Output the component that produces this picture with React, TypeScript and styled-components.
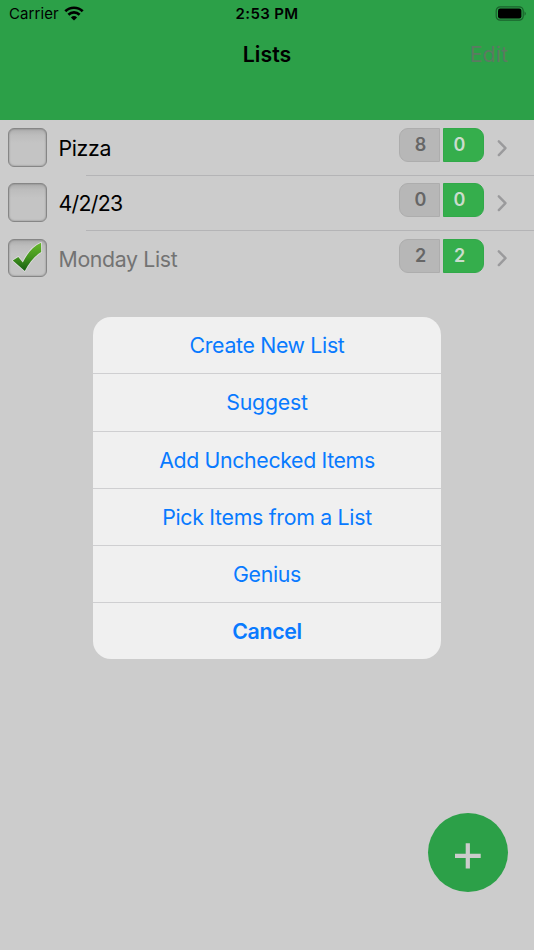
import React from 'react';
import styled, { createGlobalStyle } from 'styled-components';

const GlobalStyle = createGlobalStyle`
  * { box-sizing: border-box; }
  body { margin: 0; background: #cccccc; font-family: Inter, "Liberation Sans", sans-serif; }
  button { font: inherit; border: 0; padding: 0; background: none; }
`;

const Screen = styled.div`
  position: relative;
  width: 534px;
  height: 950px;
  overflow: hidden;
  background: #cccccc;
  color: #000;
`;

const Header = styled.header`
  height: 120px;
  background: #2ca048;
`;

const StatusBar = styled.div`
  display: grid;
  grid-template-columns: 1fr auto 1fr;
  align-items: center;
  height: 27px;
  padding: 0 7px 0 9px;
`;

const Carrier = styled.div`
  display: flex;
  align-items: center;
  gap: 5px;
  font-size: 15px;
  letter-spacing: 0.1px;
  line-height: 27px;
`;

const Clock = styled.div`
  margin-right: 2px;
  font-size: 15px;
  font-weight: 600;
  line-height: 27px;
  letter-spacing: 0.35px;
`;

const BatteryIcon = styled.svg`
  justify-self: end;
`;

const NavBar = styled.div`
  display: grid;
  grid-template-columns: 1fr auto 1fr;
  align-items: center;
  height: 54px;
  padding: 0 26px;
`;

const Title = styled.h1`
  grid-column: 2;
  margin: 0;
  font-size: 21.3px;
  font-weight: 600;
  letter-spacing: 0;
`;

const EditButton = styled.button`
  && {
    justify-self: end;
    font-size: 21.3px;
    letter-spacing: 0.1px;
    color: #5c7a62;
  }
`;

const Rows = styled.ul`
  margin: 0;
  padding: 0;
  list-style: none;
`;

const Row = styled.li`
  display: grid;
  grid-template-columns: 39px 1fr auto 11px;
  align-items: start;
  height: 55.2px;
  padding: 8.2px 26px 0 8px;

  & + & {
    background: linear-gradient(#b4b4b6, #b4b4b6) 86px 0 / 448px 1px no-repeat;
  }
`;

const Checkbox = styled.span`
  display: block;
  width: 38.6px;
  height: 38.4px;
  border: 1.5px solid #868686;
  border-radius: 6px;
  background: linear-gradient(#adadad, #bdbdbd 6px, #c4c4c4 14px);
  box-shadow: inset 0 0 2px rgba(0, 0, 0, 0.35);
`;

const Name = styled.span<{ $done: boolean; $spacing: number }>`
  padding-left: 11.5px;
  font-size: 21.3px;
  line-height: 40px;
  letter-spacing: ${p => p.$spacing}px;
  color: ${p => (p.$done ? '#737373' : '#000')};
`;

const Counts = styled.div`
  display: flex;
  gap: 3px;
  margin-right: 13px;
`;

const Count = styled.span<{ $green?: boolean }>`
  width: 41px;
  height: 34px;
  padding-left: ${p => (p.$green ? 0 : 2)}px;
  padding-right: ${p => (p.$green ? 8 : 0)}px;
  border: 1px solid ${p => (p.$green ? '#31a949' : '#adadad')};
  border-radius: ${p => (p.$green ? '0 9px 9px 0' : '9px 0 0 9px')};
  background: ${p => (p.$green ? '#35ae4c' : '#b7b7b7')};
  color: ${p => (p.$green ? '#cbdccd' : '#666')};
  font-size: 18px;
  font-weight: 600;
  line-height: 32px;
  text-align: center;
`;

const Chevron = styled.svg`
  display: block;
  margin-top: 10.5px;
`;

const Sheet = styled.div`
  position: absolute;
  left: 93px;
  top: 317px;
  width: 348px;
  display: grid;
  grid-template-rows: 56.4px repeat(5, 57.2px);
  overflow: hidden;
  border-radius: 18px;
  background: #f0f0f0;
`;

const Action = styled.button<{ $bold?: boolean; $spacing: number }>`
  && {
    font-size: 21.3px;
    font-weight: ${p => (p.$bold ? 600 : 400)};
    letter-spacing: ${p => p.$spacing}px;
    color: #087aff;
  }

  && + && {
    border-top: 1px solid #cfcfd1;
  }
`;

const AddButton = styled.button`
  && {
    position: absolute;
    left: 428px;
    top: 813px;
    width: 80px;
    height: 79px;
    border-radius: 50%;
    background: #2ca048;
  }
`;

const lists = [
  { name: 'Pizza', total: 8, checked: 0, done: false, spacing: -0.35 },
  { name: '4/2/23', total: 0, checked: 0, done: false, spacing: -0.7 },
  { name: 'Monday List', total: 2, checked: 2, done: true, spacing: -0.35 },
];

const actions = [
  { label: 'Create New List', spacing: -0.33 },
  { label: 'Suggest', spacing: -0.25 },
  { label: 'Add Unchecked Items', spacing: -0.35 },
  { label: 'Pick Items from a List', spacing: -0.29 },
  { label: 'Genius', spacing: -0.3 },
  { label: 'Cancel', spacing: -0.3, bold: true },
];

const Wifi = () => (
  <svg width="20" height="15" viewBox="0 0 20 15" fill="none" stroke="#000" strokeWidth="2.7">
    <path d="M1.3 5.3 A12.4 12.4 0 0 1 18.7 5.3" />
    <path d="M4.4 8.7 A8 8 0 0 1 15.6 8.7" />
    <path d="M10 14.4 L6.9 11.4 A4.5 4.5 0 0 1 13.1 11.4 Z" fill="#000" stroke="none" />
  </svg>
);

const Battery = () => (
  <BatteryIcon width="32" height="15" viewBox="0 0 32 15">
    <rect x="1.2" y="0.8" width="27" height="13.4" rx="4" fill="none" stroke="#1a612c" strokeWidth="1.2" />
    <rect x="3" y="2.5" width="23.4" height="10" rx="2.2" fill="#000" />
    <path d="M29.6 5.2 Q31.7 7.5 29.6 9.8 Z" fill="#165024" />
  </BatteryIcon>
);

const Tick = () => (
  <svg width="36" height="36" viewBox="0 0 36 36">
    <defs>
      <linearGradient id="tick" x1="0" y1="0" x2="0" y2="1">
        <stop offset="0" stopColor="#66b82b" />
        <stop offset="0.5" stopColor="#45961f" />
        <stop offset="1" stopColor="#145c10" />
      </linearGradient>
    </defs>
    <path
      d="M3.8 20.6 L9.3 16.9 L13.8 22.6 C17.8 13.8 24.3 6.1 32 2.7 L32.2 12 C25.8 15.9 20.3 22.3 15.8 31 Z"
      fill="url(#tick)" stroke="#dedede" strokeWidth="1.6" strokeLinejoin="round" paintOrder="stroke"
    />
  </svg>
);

export default function App() {
  return (
    <Screen>
      <GlobalStyle />
      <Header>
        <StatusBar>
          <Carrier>Carrier <Wifi /></Carrier>
          <Clock>2:53 PM</Clock>
          <Battery />
        </StatusBar>
        <NavBar>
          <Title>Lists</Title>
          <EditButton>Edit</EditButton>
        </NavBar>
      </Header>
      <Rows>
        {lists.map(list => (
          <Row key={list.name}>
            <Checkbox>{list.done && <Tick />}</Checkbox>
            <Name $done={list.done} $spacing={list.spacing}>{list.name}</Name>
            <Counts>
              <Count>{list.total}</Count>
              <Count $green>{list.checked}</Count>
            </Counts>
            <Chevron width="11" height="18" viewBox="0 0 11 18" fill="none" stroke="#9a9a9c" strokeWidth="2.4" strokeLinecap="round" strokeLinejoin="round">
              <path d="M1.8 2.3 L8.5 9.2 L1.8 16.1" />
            </Chevron>
          </Row>
        ))}
      </Rows>
      <Sheet role="dialog">
        {actions.map(a => (
          <Action key={a.label} $bold={a.bold} $spacing={a.spacing}>{a.label}</Action>
        ))}
      </Sheet>
      <AddButton aria-label="Add">
        <svg width="80" height="79" viewBox="0 0 80 79" stroke="#cccccc" strokeWidth="4.2">
          <path d="M27 42.8 H52.7 M39.8 30.2 V55.4" />
        </svg>
      </AddButton>
    </Screen>
  );
}
